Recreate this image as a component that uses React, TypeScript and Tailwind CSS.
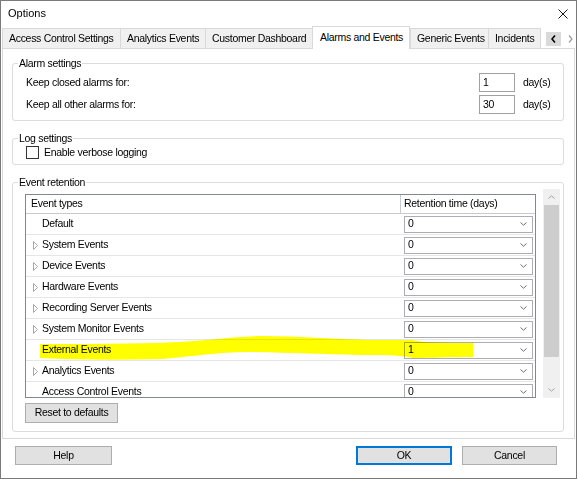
import React from "react";

type EventRow = { name: string; expand: boolean; value: string };

const eventRows: EventRow[] = [
  { name: "Default", expand: false, value: "0" },
  { name: "System Events", expand: true, value: "0" },
  { name: "Device Events", expand: true, value: "0" },
  { name: "Hardware Events", expand: true, value: "0" },
  { name: "Recording Server Events", expand: true, value: "0" },
  { name: "System Monitor Events", expand: true, value: "0" },
  { name: "External Events", expand: false, value: "1" },
  { name: "Analytics Events", expand: true, value: "0" },
  { name: "Access Control Events", expand: false, value: "0" },
];

const tabs = [
  { label: "Access Control Settings", w: "w-[118px]" },
  { label: "Analytics Events", w: "w-[85px]" },
  { label: "Customer Dashboard", w: "w-[107px]" },
  { label: "Alarms and Events", w: "w-[98px]", active: true },
  { label: "Generic Events", w: "w-[78px]" },
  { label: "Incidents", w: "w-[53px]" },
];

function ComboChevron() {
  return (
    <svg width="7" height="4" viewBox="0 0 7 4" className="shrink-0">
      <path d="M0.5 0.5 L3.5 3.2 L6.5 0.5" fill="none" stroke="#707070" strokeWidth="1" />
    </svg>
  );
}

function ExpandArrow() {
  return (
    <svg width="5" height="9" viewBox="0 0 5 9" className="shrink-0">
      <path d="M0.5 0.5 L4.5 4.5 L0.5 8.5 Z" fill="none" stroke="#a6a6a6" strokeWidth="1" />
    </svg>
  );
}

function Button({ label, primary, className }: { label: string; primary?: boolean; className: string }) {
  return (
    <div
      className={`flex h-[19px] items-center justify-center bg-[#e1e1e1] ${
        primary ? "border-2 border-[#0078d7]" : "border border-[#adadad]"
      } ${className}`}
    >
      {label}
    </div>
  );
}

export default function App() {
  return (
    <div className="relative h-[480px] w-[578px] overflow-hidden bg-white font-['Liberation_Sans',Arial,sans-serif] text-[10.5px] tracking-[-0.3px] text-black">
      <div className="flex h-[479px] w-[577px] flex-col border border-[#7a7a7a] bg-white">
        {/* Title bar */}
        <div className="flex h-[25px] items-center justify-between pl-[7px] pr-[8px]">
          <span className="text-[11px] tracking-normal">Options</span>
          <svg width="10" height="10" viewBox="0 0 10 10">
            <path d="M0.5 0.5 L9.5 9.5 M9.5 0.5 L0.5 9.5" stroke="#1a1a1a" strokeWidth="1" />
          </svg>
        </div>

        {/* Tabs */}
        <div className="ml-[1px] flex h-[22px] items-end">
          {tabs.map((t, i) =>
            t.active ? (
              <div
                key={t.label}
                className={`relative z-10 -mb-px flex h-[23px] items-center border-x border-t border-[#d9d9d9] bg-white pb-[1px] pl-[7px] ${t.w}`}
              >
                {t.label}
              </div>
            ) : (
              <div
                key={t.label}
                className={`flex h-[20px] items-center border-t border-l border-[#d9d9d9] bg-[#f0f0f0] pl-[6px] ${
                  i === tabs.length - 1 ? "border-r" : ""
                } ${t.w} whitespace-nowrap overflow-hidden`}
              >
                {t.label}
              </div>
            )
          )}
          <div className="mb-[2px] ml-[5px] flex items-center">
            <div className="flex h-[14px] w-[15px] items-center justify-center bg-[#dadada]">
              <svg width="5" height="8" viewBox="0 0 5 8">
                <path d="M4 0.5 L1 4 L4 7.5" fill="none" stroke="#000" strokeWidth="1.6" />
              </svg>
            </div>
            <div className="ml-[5px] flex h-[14px] w-[8px] items-center justify-center">
              <svg width="5" height="8" viewBox="0 0 5 8">
                <path d="M1 0.5 L4 4 L1 7.5" fill="none" stroke="#9a9a9a" strokeWidth="1.2" />
              </svg>
            </div>
          </div>
        </div>

        {/* Tab page */}
        <div className="ml-[1px] flex h-[391px] w-[573px] flex-col border border-[#d9d9d9] bg-white pl-[9px] pr-[10px]">
          {/* Alarm settings */}
          <fieldset className="mt-[8px] rounded-[3px] border border-[#dcdcdc] pb-[6px] pl-[13px] pr-[7px]">
            <legend className="-ml-[8px] px-[1px] leading-[13px]">Alarm settings</legend>
            <div className="mt-[3px] flex flex-col gap-[3px]">
              {[
                { label: "Keep closed alarms for:", value: "1" },
                { label: "Keep all other alarms for:", value: "30" },
              ].map((r) => (
                <div key={r.label} className="flex h-[19px] items-center">
                  <span className="flex-1">{r.label}</span>
                  <div className="flex h-[19px] w-[36px] items-center border border-[#a0a0a0] pl-[3px]">{r.value}</div>
                  <span className="ml-[8px] w-[33px]">day(s)</span>
                </div>
              ))}
            </div>
          </fieldset>

          {/* Log settings */}
          <fieldset className="mt-[11px] rounded-[3px] border border-[#dcdcdc] pb-[5px] pl-[13px]">
            <legend className="-ml-[8px] px-[1px] leading-[13px]">Log settings</legend>
            <div className="mt-[1px] flex h-[13px] items-center">
              <div className="h-[13px] w-[13px] border border-[#333333] bg-white" />
              <span className="ml-[5px]">Enable verbose logging</span>
            </div>
          </fieldset>

          {/* Event retention */}
          <fieldset className="mt-[11px] rounded-[3px] border border-[#dcdcdc] pb-[8px] pl-[12px]">
            <legend className="-ml-[7px] px-[1px] leading-[13px]">Event retention</legend>
            <div className="flex items-end">
              <div className="h-[204px] w-[511px] overflow-hidden border border-[#828790]">
                <div className="flex h-[19px] border-b border-[#c5cbd6] bg-white">
                  <div className="flex w-[375px] items-center border-r border-[#c5cbd6] pl-[5px]">Event types</div>
                  <div className="flex flex-1 items-center pl-[3px]">Retention time (days)</div>
                </div>
                {eventRows.map((r) => (
                  <div key={r.name} className="flex h-[21px] items-center border-b border-[#e6e6e6]">
                    <div className="flex w-[375px] items-center pl-[7px]">
                      {r.expand ? <ExpandArrow /> : <div className="w-[5px]" />}
                      <span className="ml-[4px]">{r.name}</span>
                    </div>
                    <div className="ml-[3px] flex h-[17px] w-[129px] items-center justify-between border border-[#abadb3] pl-[3px] pr-[5px]">
                      <span>{r.value}</span>
                      <ComboChevron />
                    </div>
                  </div>
                ))}
              </div>
              {/* Scrollbar */}
              <div className="ml-[7px] flex h-[209px] w-[17px] flex-col bg-[#f0f0f0]">
                <div className="flex h-[16px] items-center justify-center">
                  <svg width="7" height="4" viewBox="0 0 7 4">
                    <path d="M0.5 3.5 L3.5 0.8 L6.5 3.5" fill="none" stroke="#a3a3a3" strokeWidth="1" />
                  </svg>
                </div>
                <div className="mx-[1px] h-[152px] bg-[#cdcdcd]" />
                <div className="flex-1" />
                <div className="flex h-[16px] items-center justify-center">
                  <svg width="7" height="4" viewBox="0 0 7 4">
                    <path d="M0.5 0.5 L3.5 3.2 L6.5 0.5" fill="none" stroke="#a3a3a3" strokeWidth="1" />
                  </svg>
                </div>
              </div>
            </div>
            <Button label="Reset to defaults" className="mt-[5px] h-[20px] w-[93px]" />
          </fieldset>
        </div>

        {/* Dialog buttons */}
        <div className="mt-[7px] flex items-center">
          <Button label="Help" className="ml-[14px] w-[97px]" />
          <Button label="OK" primary className="ml-auto w-[96px]" />
          <Button label="Cancel" className="ml-[10px] mr-[19px] w-[95px]" />
        </div>
      </div>

      {/* Highlighter stroke drawn over the dialog */}
      <svg className="pointer-events-none absolute left-0 top-0 mix-blend-multiply" width="578" height="480" viewBox="0 0 578 480">
        <path
          d="M40 344 C80 344 130 344 180 342 C210 340 230 337 260 336 C300 336 330 339 370 340 L413 340 C418 342 425 343 473 343 L473 357 C450 357 430 358 413 358 C405 356 395 355 360 355 C320 354 290 353 250 352 C215 352 190 357 160 359 C120 360 80 360 40 358 Z"
          fill="#ffff00"
        />
      </svg>
    </div>
  );
}
